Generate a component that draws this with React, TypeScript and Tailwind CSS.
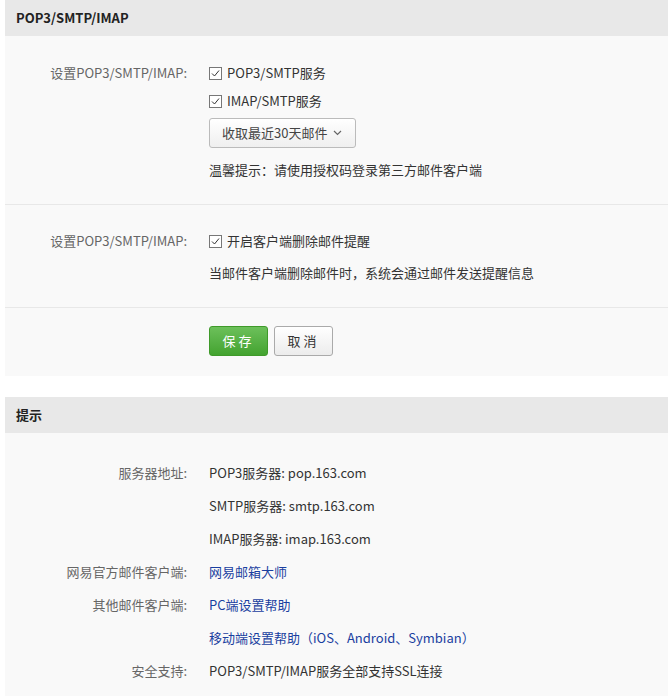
import React from "react";

const Check = () => (
  <span className="inline-flex items-center justify-center w-[13px] h-[13px] border border-[#777] bg-white mr-[5px]">
    <svg width="9" height="9" viewBox="0 0 9 9"><path d="M1 4.5 L3.5 7 L8 1.5" fill="none" stroke="#333" strokeWidth="1" /></svg>
  </span>
);

const Row = ({ label, children, h = 33 }: { label?: string; children: React.ReactNode; h?: number }) => (
  <div className="flex items-center" style={{ height: h }}>
    <div className="w-[182px] text-right text-[#666] pr-0">{label}</div>
    <div className="ml-[22px] flex items-center text-[#333]">{children}</div>
  </div>
);

export default function App() {
  return (
    <div className="w-[668px] h-[696px] overflow-hidden bg-white text-[13px]" style={{ fontFamily: '"Microsoft YaHei","Noto Sans CJK SC",sans-serif' }}>
      <div className="ml-[5px] bg-[#f9f9f9]">
        <div className="h-[36px] bg-[#e8e8e8] flex items-center pl-[11px] font-bold text-[#222]">POP3/SMTP/IMAP</div>
        <div className="pt-[23px]">
          <div className="flex">
            <div className="w-[182px] text-right text-[#666] leading-[28px]">设置POP3/SMTP/IMAP:</div>
            <div className="ml-[22px] flex flex-col text-[#333]">
              <div className="h-[28px] flex items-center"><Check />POP3/SMTP服务</div>
              <div className="h-[28px] flex items-center"><Check />IMAP/SMTP服务</div>
              <div className="mt-[3px] h-[30px] w-[147px] border border-[#bbb] rounded-[3px] bg-gradient-to-b from-white to-[#efefef] flex items-center pl-[12px] text-[#444]">
                收取最近30天邮件
                <svg className="ml-[6px]" width="9" height="6" viewBox="0 0 9 6"><path d="M1 1 L4.5 4.5 L8 1" fill="none" stroke="#666" strokeWidth="1.2" /></svg>
              </div>
              <div className="mt-[12px] h-[20px] flex items-center">温馨提示：请使用授权码登录第三方邮件客户端</div>
            </div>
          </div>
          <div className="h-[25px] border-b border-[#e8e8e8]" />
        </div>
        <div className="pt-[21px]">
          <div className="flex">
            <div className="w-[182px] text-right text-[#666] leading-[30px]">设置POP3/SMTP/IMAP:</div>
            <div className="ml-[22px] flex flex-col text-[#333]">
              <div className="h-[30px] flex items-center"><Check />开启客户端删除邮件提醒</div>
              <div className="mt-[7px] h-[20px] flex items-center">当邮件客户端删除邮件时，系统会通过邮件发送提醒信息</div>
            </div>
          </div>
          <div className="h-[25px] border-b border-[#e8e8e8]" />
        </div>
        <div className="pt-[18px] pb-[20px] flex pl-[204px] gap-[6px]">
          <button className="w-[59px] h-[30px] rounded-[3px] border border-[#3f9a2a] bg-gradient-to-b from-[#6cc05a] to-[#43a32f] text-white tracking-[3px]">保存</button>
          <button className="w-[59px] h-[30px] rounded-[3px] border border-[#aaa] bg-gradient-to-b from-white to-[#ececec] text-[#333] tracking-[3px]">取消</button>
        </div>
      </div>
      <div className="ml-[5px] mt-[21px] bg-[#f9f9f9] h-[300px]">
        <div className="h-[36px] bg-[#e8e8e8] flex items-center pl-[11px] font-bold text-[#222]">提示</div>
        <div className="pt-[23px]">
          <Row label="服务器地址:">POP3服务器: pop.163.com</Row>
          <Row label="">SMTP服务器: smtp.163.com</Row>
          <Row label="">IMAP服务器: imap.163.com</Row>
          <Row label="网易官方邮件客户端:"><span className="text-[#1a3fa0]">网易邮箱大师</span></Row>
          <Row label="其他邮件客户端:"><span className="text-[#1a3fa0]">PC端设置帮助</span></Row>
          <Row label=""><span className="text-[#1a3fa0]">移动端设置帮助（iOS、Android、Symbian）</span></Row>
          <Row label="安全支持:">POP3/SMTP/IMAP服务全部支持SSL连接</Row>
        </div>
      </div>
    </div>
  );
}
